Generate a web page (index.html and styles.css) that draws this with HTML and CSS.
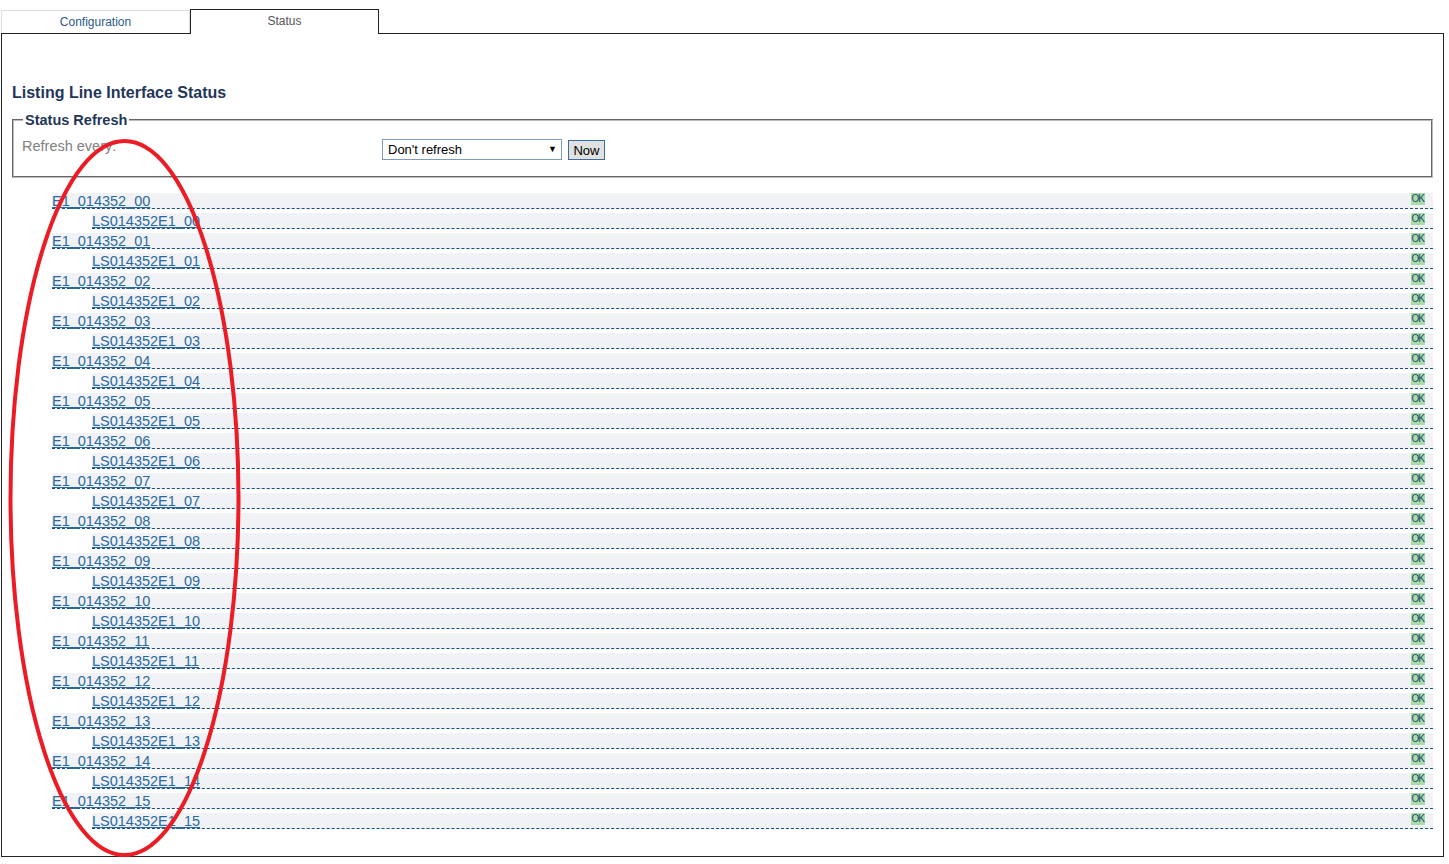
FILE: index.html
```html
<!DOCTYPE html>
<html>
<head>
<meta charset="utf-8">
<title>Line Interface Status</title>
<link rel="stylesheet" href="styles.css">
</head>
<body>
<div class="tabs">
  <a class="tab" href="#">Configuration</a>
  <a class="tab active" href="#">Status</a>
</div>
<div class="panel">
  <h2 class="title">Listing Line Interface Status</h2>
  <fieldset class="refresh">
    <legend>Status Refresh</legend>
    <div class="refresh-row">
      <span class="label">Refresh every:</span>
      <span class="select-wrap">
        <select class="select"><option>Don't refresh</option></select>
        <span class="arrow">&#9660;</span>
      </span>
      <button class="btn">Now</button>
    </div>
  </fieldset>
  <div class="list" id="list"></div>
</div>
<svg class="annot" width="1449" height="864" viewBox="0 0 1449 864">
  <ellipse cx="124.5" cy="498" rx="114" ry="357" fill="none" stroke="#ec1c24" stroke-width="4"/>
</svg>
<script src="app.js"></script>
</body>
</html>
```
FILE: app.js
```js
var list = document.getElementById('list');
var html = '';
for (var i = 0; i < 16; i++) {
  var n = (i < 10 ? '0' : '') + i;
  html += '<div class="row lvl0"><a href="#">E1_014352_' + n + '</a><span class="ok">OK</span></div>';
  html += '<div class="row lvl1"><a href="#">LS014352E1_' + n + '</a><span class="ok">OK</span></div>';
}
list.innerHTML = html;
```
FILE: styles.css
```css
html, body {
  margin: 0;
  padding: 0;
  background: #fff;
  font-family: "Liberation Sans", Arial, sans-serif;
}
.tabs {
  display: flex;
  padding-top: 9px;
  padding-left: 1px;
  height: 24px;
}
.tab {
  display: block;
  box-sizing: border-box;
  text-decoration: none;
  font-size: 12px;
  text-align: center;
}
.tab:not(.active) {
  width: 189px;
  height: 23px;
  margin-top: 1px;
  border: 1px solid #dcdce4;
  border-bottom: none;
  color: #2b5b86;
  line-height: 23px;
}
.tab.active {
  width: 189px;
  height: 25px;
  border: 1px solid #222;
  border-bottom: none;
  background: #fff;
  color: #555;
  line-height: 22px;
  position: relative;
  z-index: 1;
}
.panel {
  box-sizing: border-box;
  margin-left: 1px;
  width: 1443px;
  height: 824px;
  border: 1px solid #222;
  padding: 50px 10px 0 10px;
}
.title {
  margin: 0;
  font-size: 16px;
  line-height: 18px;
  font-weight: bold;
  color: #1f3659;
}
.refresh {
  margin: 10px 0 0 0;
  padding: 11px 9px 16px 8px;
  border: 2px groove #bbb;
  min-width: 0;
}
.refresh legend {
  padding: 0 2px;
  margin-left: 1px;
  font-size: 14.5px;
  font-weight: bold;
  color: #1f3659;
  line-height: 16px;
}
.refresh-row {
  display: flex;
  align-items: flex-start;
}
.label {
  width: 360px;
  font-size: 14.5px;
  color: #808080;
  line-height: 18px;
  margin-top: -2px;
}
.select-wrap {
  position: relative;
}
.select {
  -webkit-appearance: none;
  appearance: none;
  box-sizing: border-box;
  width: 180px;
  height: 21px;
  border: 1px solid #7f9db9;
  border-radius: 0;
  background: #fff;
  font-family: "Liberation Sans", Arial, sans-serif;
  font-size: 13px;
  color: #000;
  padding: 0 0 0 5px;
  margin: 0;
  display: block;
}
.arrow {
  position: absolute;
  right: 5px;
  top: 5px;
  font-size: 9px;
  color: #000;
  pointer-events: none;
}
.btn {
  box-sizing: border-box;
  margin: 1px 0 0 6px;
  height: 20px;
  width: 37px;
  padding: 0;
  border: 1px solid #3d6e99;
  background: #e1e1e1;
  font-family: "Liberation Sans", Arial, sans-serif;
  font-size: 13px;
  color: #000;
  border-radius: 0;
}
.list {
  margin-top: 15px;
}
.row {
  box-sizing: border-box;
  height: 16px;
  margin-bottom: 4px;
  background: #f1f2f6;
  border-bottom: 1px dashed #134f84;
  display: flex;
  justify-content: space-between;
  align-items: flex-start;
  padding-right: 8px;
}
.row.lvl0 { margin-left: 40px; }
.row.lvl1 { margin-left: 80px; }
.row a {
  font-size: 14.5px;
  line-height: 16px;
  color: #2a6aa0;
  text-decoration: underline;
}
.ok {
  font-size: 10px;
  line-height: 12px;
  height: 12px;
  padding: 0 1px;
  background: #a9dca9;
  color: #1d4a6a;
  letter-spacing: -1px;
}
.annot {
  position: absolute;
  left: 0;
  top: 0;
  pointer-events: none;
}
```
